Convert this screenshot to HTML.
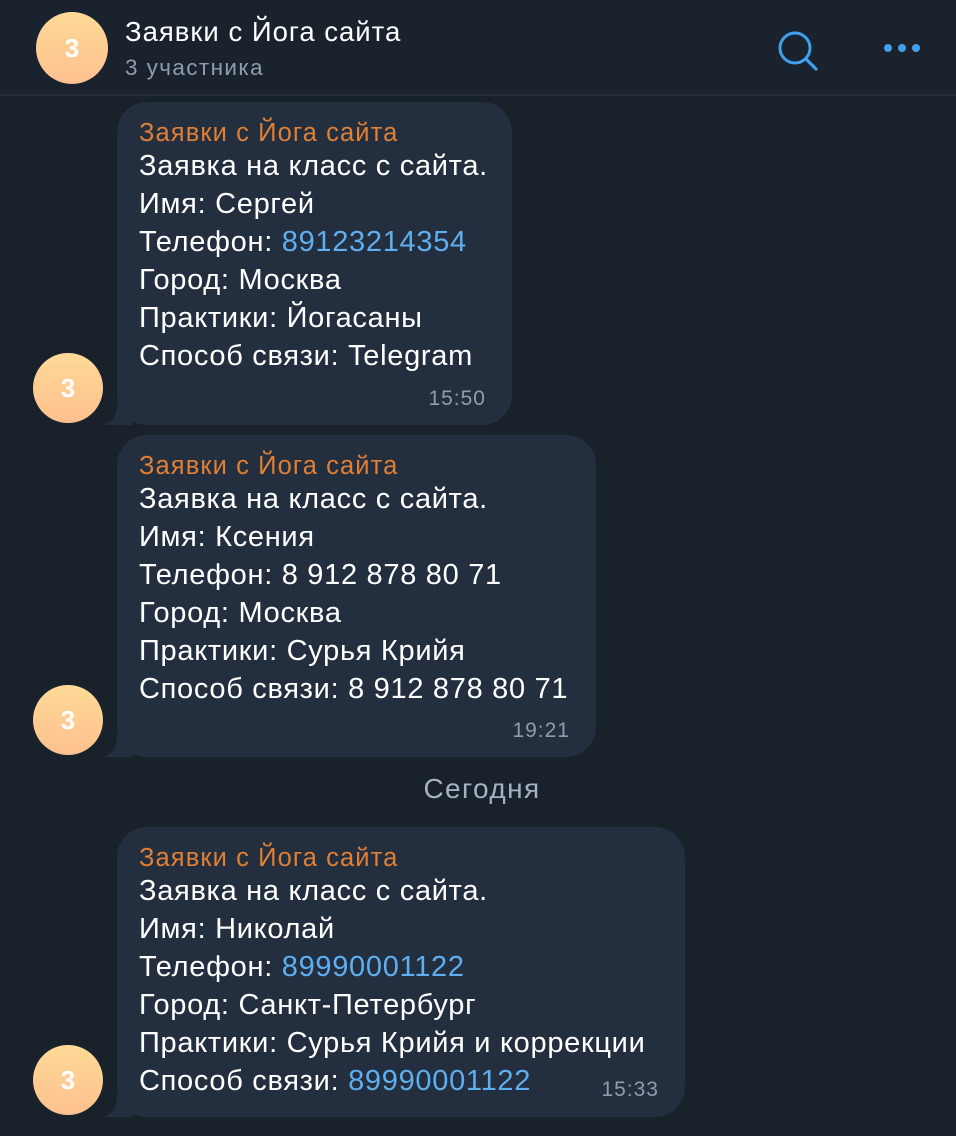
<!DOCTYPE html>
<html><head><meta charset="utf-8"><style>
*{margin:0;padding:0;box-sizing:border-box}
body{width:956px;height:1136px;background:#19212b;font-family:"Liberation Sans","DejaVu Sans",sans-serif;position:relative;overflow:hidden;color:#fff}
.hdr{position:absolute;left:0;top:0;width:956px;height:96px;background:#1a222d;border-bottom:2px solid #232e3a}
.av{position:absolute;border-radius:50%;background:linear-gradient(#fed996,#fdc08f);color:#fff;font-weight:bold;display:flex;align-items:center;justify-content:center;font-size:26px}
.b{position:absolute;left:117px;background:#232f3e;border-radius:30px}
.t{position:absolute;left:22px;white-space:nowrap;font-size:29px;letter-spacing:0.7px;line-height:38px}
.n{color:#e07f35;font-size:25.5px;letter-spacing:1.1px}
.l{color:#5eaef0}
.tm{position:absolute;right:26px;color:#8e9dae;font-size:21px;letter-spacing:1px}
.tail{position:absolute;left:-14px;bottom:0;width:30px;height:22px}
</style></head><body>
<div class="hdr">
<div class="av" style="left:36px;top:12px;width:72px;height:72px">3</div>
<div style="position:absolute;left:125px;top:16px;font-size:27.5px;letter-spacing:1px">Заявки с Йога сайта</div>
<div style="position:absolute;left:125px;top:55px;font-size:22.5px;letter-spacing:1.4px;color:#8e9dae">3 участника</div>
<svg style="position:absolute;left:770px;top:24px" width="52" height="50"><circle cx="25" cy="24" r="15" fill="none" stroke="#3fa0ee" stroke-width="3"/><line x1="36" y1="35" x2="46" y2="45" stroke="#3fa0ee" stroke-width="3.2" stroke-linecap="round"/></svg>
<svg style="position:absolute;left:880px;top:40px" width="44" height="16"><circle cx="8" cy="8" r="4" fill="#3fa0ee"/><circle cx="22" cy="8" r="4" fill="#3fa0ee"/><circle cx="36" cy="8" r="4" fill="#3fa0ee"/></svg>
</div>

<div class="b" style="top:102px;width:395px;height:323px">
<svg class="tail" viewBox="0 0 30 22"><path d="M14 0 L30 0 L30 22 L0 22 C8 20 14 14 14 0Z" fill="#232f3e"/></svg>
<div class="t n" style="top:12px">Заявки с Йога сайта</div>
<div class="t" style="top:45px">Заявка на класс с сайта.</div>
<div class="t" style="top:83px">Имя: Сергей</div>
<div class="t" style="top:121px">Телефон: <span class="l">89123214354</span></div>
<div class="t" style="top:159px">Город: Москва</div>
<div class="t" style="top:197px">Практики: Йогасаны</div>
<div class="t" style="top:235px">Способ связи: Telegram</div>
<div class="tm" style="top:285px">15:50</div>
</div>
<div class="av" style="left:33px;top:353px;width:70px;height:70px">3</div>

<div class="b" style="top:435px;width:479px;height:322px">
<svg class="tail" viewBox="0 0 30 22"><path d="M14 0 L30 0 L30 22 L0 22 C8 20 14 14 14 0Z" fill="#232f3e"/></svg>
<div class="t n" style="top:12px">Заявки с Йога сайта</div>
<div class="t" style="top:45px">Заявка на класс с сайта.</div>
<div class="t" style="top:83px">Имя: Ксения</div>
<div class="t" style="top:121px">Телефон: 8 912 878 80 71</div>
<div class="t" style="top:159px">Город: Москва</div>
<div class="t" style="top:197px">Практики: Сурья Крийя</div>
<div class="t" style="top:235px">Способ связи: 8 912 878 80 71</div>
<div class="tm" style="top:284px">19:21</div>
</div>
<div class="av" style="left:33px;top:685px;width:70px;height:70px">3</div>

<div style="position:absolute;left:0;width:956px;text-align:center;padding-left:8px;top:773px;font-size:28px;letter-spacing:1.4px;color:#a3b3c5">Сегодня</div>

<div class="b" style="top:827px;width:568px;height:290px">
<svg class="tail" viewBox="0 0 30 22"><path d="M14 0 L30 0 L30 22 L0 22 C8 20 14 14 14 0Z" fill="#232f3e"/></svg>
<div class="t n" style="top:12px">Заявки с Йога сайта</div>
<div class="t" style="top:45px">Заявка на класс с сайта.</div>
<div class="t" style="top:83px">Имя: Николай</div>
<div class="t" style="top:121px">Телефон: <span class="l">89990001122</span></div>
<div class="t" style="top:159px">Город: Санкт-Петербург</div>
<div class="t" style="top:197px">Практики: Сурья Крийя и коррекции</div>
<div class="t" style="top:235px">Способ связи: <span class="l">89990001122</span></div>
<div class="tm" style="top:251px">15:33</div>
</div>
<div class="av" style="left:33px;top:1045px;width:70px;height:70px">3</div>
</body></html>
